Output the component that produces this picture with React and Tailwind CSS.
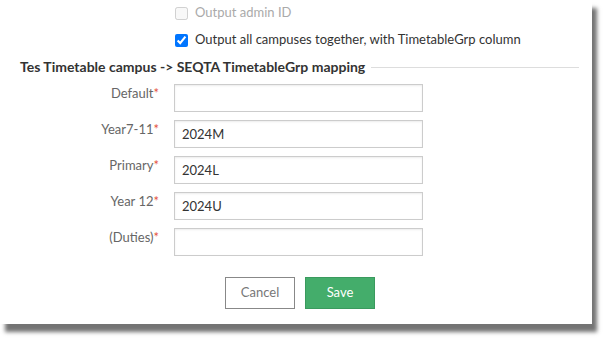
import React from 'react';

const rows = [
  { label: 'Default', value: '' },
  { label: 'Year7-11', value: '2024M' },
  { label: 'Primary', value: '2024L' },
  { label: 'Year 12', value: '2024U' },
  { label: '(Duties)', value: '' },
];

export default function App() {
  return (
    <div className="h-[339px] w-[607px] bg-white font-['Lato','Noto_Sans',sans-serif]">
      <div className="h-[324px] w-[592px] bg-white shadow-[5px_8px_4px_rgba(0,0,0,0.55)]">
        <div className="flex flex-col gap-[7px] pl-[175px] pt-[3px]">
          <label className="flex h-[20px] items-center gap-[7px] text-[13px] text-[#aaa]">
            <input type="checkbox" disabled className="m-0 h-[13px] w-[13px]" />
            Output admin ID
          </label>
          <label className="flex h-[20px] items-center gap-[7px] text-[13px] text-[#333]">
            <input type="checkbox" defaultChecked className="m-0 h-[13px] w-[13px]" />
            Output all campuses together, with TimetableGrp column
          </label>
        </div>

        <fieldset className="mx-[14px] mt-[8px] w-[565px] border-t border-[#ddd]">
          <legend className="px-[6px] text-[14px] font-bold leading-[18px] text-[#333]">
            Tes Timetable campus -&gt; SEQTA TimetableGrp mapping
          </legend>

          <div className="-ml-[14px] flex flex-col gap-[8px] pt-[8px]">
            {rows.map((r) => (
              <div key={r.label} className="flex gap-[15px]">
                <div className="w-[159px] text-right text-[13px] leading-[18px] text-[#666]">
                  {r.label}
                  <span className="text-[#e5533d]">*</span>
                </div>
                <input
                  type="text"
                  defaultValue={r.value}
                  className="h-[28px] w-[249px] border border-[#ccc] px-[7px] text-[13px] text-[#333] shadow-[inset_0_1px_2px_rgba(0,0,0,0.08)] outline-none"
                />
              </div>
            ))}
          </div>

          <div className="-ml-[14px] flex gap-[10px] pl-[225px] pt-[21px]">
            <button className="h-[32px] w-[70px] border border-[#888] bg-white text-[13px] text-[#777]">
              Cancel
            </button>
            <button className="h-[32px] w-[70px] border border-[#3a9a5e] bg-[#44ad6b] text-[13px] text-white">
              Save
            </button>
          </div>
        </fieldset>
      </div>
    </div>
  );
}
